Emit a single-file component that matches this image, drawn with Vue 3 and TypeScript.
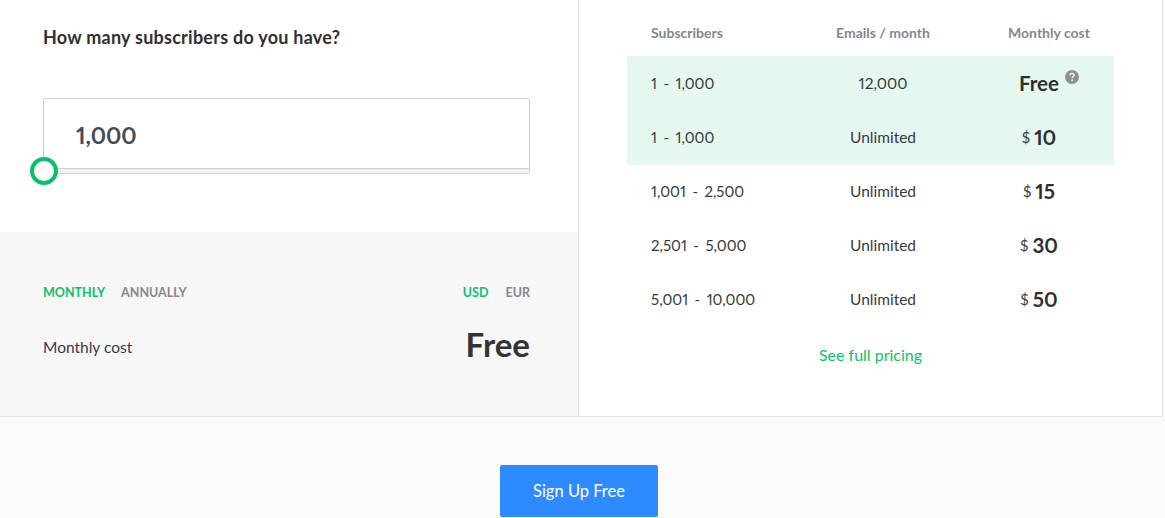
<template>
  <div class="page">
    <div class="card">
      <section class="calc">
        <div class="calc-top">
          <h2 class="question">How many subscribers do you have?</h2>
          <div class="slider-box">
            <div class="amount">1,000</div>
            <div class="track"></div>
            <span class="thumb"></span>
          </div>
        </div>
        <div class="calc-bottom">
          <div class="toggles">
            <div class="toggle-group">
              <span class="toggle on">MONTHLY</span>
              <span class="toggle">ANNUALLY</span>
            </div>
            <div class="toggle-group currency">
              <span class="toggle on">USD</span>
              <span class="toggle">EUR</span>
            </div>
          </div>
          <div class="cost">
            <span class="cost-label">Monthly cost</span>
            <span class="cost-value">Free</span>
          </div>
        </div>
      </section>

      <section class="pricing">
        <div class="table">
          <div class="row head">
            <span>Subscribers</span>
            <span class="mid">Emails / month</span>
            <span class="mid">Monthly cost</span>
          </div>
          <div v-for="(r, i) in rows" :key="i" class="row" :class="{ hl: i < 2 }">
            <span class="range">{{ r.from }}<i class="dash">-</i>{{ r.to }}</span>
            <span class="mid">{{ r.emails }}</span>
            <span v-if="r.price" class="mid price"><small>$</small> <b>{{ r.price }}</b></span>
            <span v-else class="mid price">
              <b>Free</b>
              <svg class="help" viewBox="0 0 14 14" width="14" height="14">
                <circle cx="7" cy="7" r="7" fill="#8a9190" />
                <path d="M4.9 5.4c0-1.3 1-2 2.1-2s2.1.7 2.1 1.8c0 1.5-2 1.5-2 3" fill="none" stroke="#e4f8ef" stroke-width="1.5" />
                <circle cx="7.1" cy="10.3" r="1" fill="#e4f8ef" />
              </svg>
            </span>
          </div>
        </div>
        <a class="full" href="#">See full pricing</a>
      </section>
    </div>
    <div class="footer">
      <button class="signup" type="button">Sign Up Free</button>
    </div>
  </div>
</template>

<script setup lang="ts">
interface PriceRow {
  from: string
  to: string
  emails: string
  price?: number
}

const rows: PriceRow[] = [
  { from: '1', to: '1,000', emails: '12,000' },
  { from: '1', to: '1,000', emails: 'Unlimited', price: 10 },
  { from: '1,001', to: '2,500', emails: 'Unlimited', price: 15 },
  { from: '2,501', to: '5,000', emails: 'Unlimited', price: 30 },
  { from: '5,001', to: '10,000', emails: 'Unlimited', price: 50 },
]
</script>

<style>
html,
body {
  margin: 0;
  background: #fafafa;
  overflow: hidden;
}
</style>

<style scoped>
.page {
  width: 1165px;
  height: 518px;
  overflow: hidden;
  font-family: Lato, "Open Sans", sans-serif;
  font-variant-numeric: proportional-nums;
  color: #333;
  background: #fafafa;
}

.card {
  display: flex;
  width: 1163px;
  height: 417px;
  background: #fff;
  border-right: 1px solid #e2e2e2;
  border-bottom: 1px solid #e2e2e2;
  box-sizing: border-box;
}

.calc {
  width: 579px;
  border-right: 1px solid #e2e2e2;
  box-sizing: border-box;
  display: flex;
  flex-direction: column;
}

.calc-top {
  height: 232px;
  padding: 27px 48px 0 43px;
  box-sizing: border-box;
}

.question {
  margin: 0;
  font-size: 18px;
  line-height: 20px;
  letter-spacing: 0.25px;
  font-weight: 700;
  color: #2f2f33;
}

.slider-box {
  position: relative;
  margin-top: 51px;
  height: 76px;
  border: 1px solid #ccd0d6;
  border-radius: 2px;
  box-sizing: border-box;
}

.amount {
  height: 69px;
  padding-left: 32px;
  font-size: 23px;
  font-weight: 700;
  line-height: 72px;
  color: #454b57;
}

.track {
  height: 5px;
  background: #f3f3f3;
  border-top: 1px solid #ccd0d6;
  box-sizing: border-box;
}

.thumb {
  position: absolute;
  left: -14px;
  top: 58px;
  width: 28px;
  height: 28px;
  border: 4px solid #0cc06a;
  border-radius: 50%;
  background: #fff;
  box-sizing: border-box;
}

.calc-bottom {
  flex: 1;
  background: #f7f7f7;
  padding: 53px 48px 0 43px;
}

.toggles,
.cost {
  display: flex;
  justify-content: space-between;
}

.toggle-group {
  display: flex;
  gap: 16px;
}

.toggle-group.currency {
  gap: 17px;
}

.toggle {
  font-size: 12.5px;
  line-height: 16px;
  font-weight: 700;
  color: #84888c;
}

.toggle.on {
  color: #0cc06a;
}

.cost {
  align-items: center;
  margin-top: 23px;
}

.cost-label {
  font-size: 15.5px;
  color: #3a3a3e;
  margin-top: 6px;
}

.cost-value {
  font-size: 33px;
  line-height: 40px;
  font-weight: 700;
  color: #333;
}

.pricing {
  flex: 1;
  padding-left: 48px;
}

.table {
  width: 487px;
}

.row {
  display: grid;
  grid-template-columns: 131px 202px 130px;
  align-items: center;
  height: 54px;
  padding-left: 24px;
  box-sizing: border-box;
  font-size: 15.5px;
  color: #3a3a3e;
}

.row.head {
  height: 56px;
  padding-top: 8px;
  font-size: 14px;
  font-weight: 700;
  color: #84888c;
}

.row.hl {
  background: #e4f8ef;
  box-shadow: 0 1px 0 #e4f8ef;
}

.range {
  font-size: 15px;
}

.dash {
  font-style: normal;
  margin: 0 6.5px;
}

.mid {
  text-align: center;
}

.price {
  padding-right: 20px;
}

.price small {
  font-size: 15px;
  position: relative;
  top: -2px;
}

.price b {
  font-size: 20.5px;
  font-weight: 700;
  color: #2f2f33;
}

.help {
  position: absolute;
  margin-left: 6px;
  margin-top: -1px;
}

.full {
  display: block;
  width: 487px;
  margin-top: 19px;
  text-align: center;
  font-size: 16px;
  line-height: 20px;
  color: #0cc06a;
  text-decoration: none;
}

.footer {
  display: flex;
  justify-content: center;
  padding: 48px 7px 0 0;
}

.signup {
  width: 158px;
  height: 52px;
  margin: 0;
  padding: 0 0 1px;
  border: 0;
  border-radius: 2px;
  background: #2e8bff;
  color: #fff;
  font-family: inherit;
  font-size: 16.5px;
}
</style>
